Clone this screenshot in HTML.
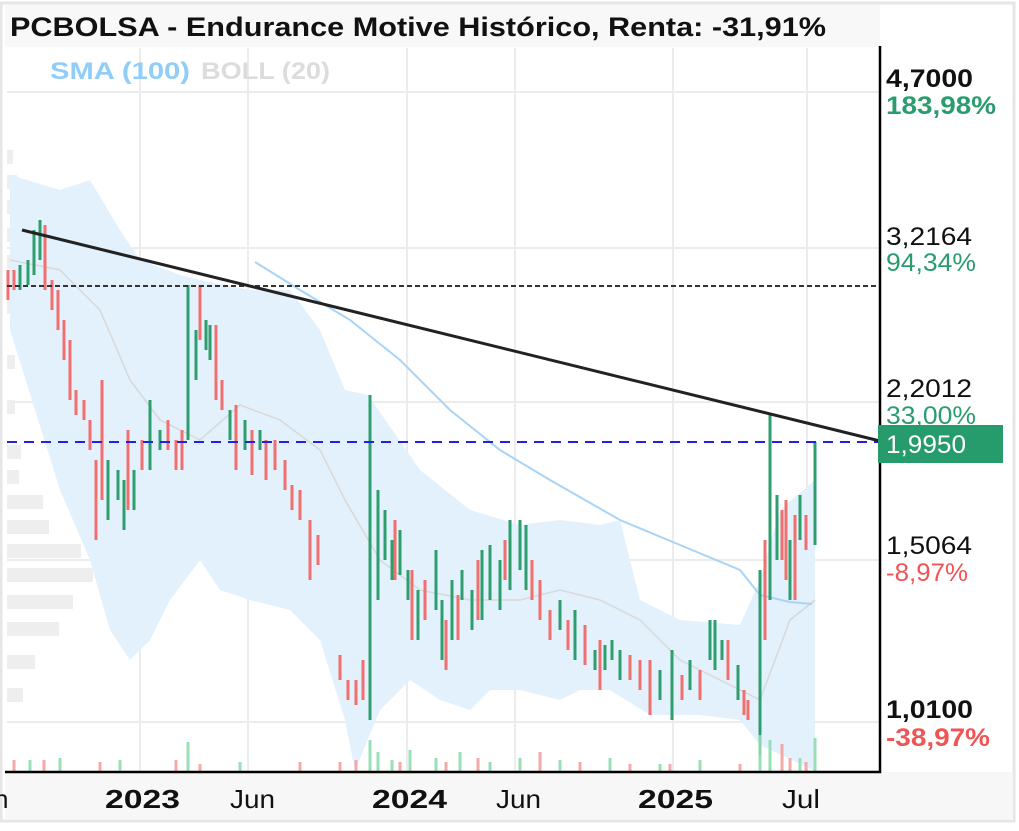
<!DOCTYPE html>
<html><head><meta charset="utf-8"><style>
body{margin:0;background:#fff;width:1019px;height:826px;overflow:hidden;font-family:"Liberation Sans",sans-serif}
</style></head><body>
<svg width="1019" height="826" viewBox="0 0 1019 826" xmlns="http://www.w3.org/2000/svg" font-family="Liberation Sans, sans-serif">
<rect x="0" y="0" width="1019" height="826" fill="#fff"/>
<rect x="1" y="3" width="1013" height="818" fill="none" stroke="#e6e6e6" stroke-width="3"/>
<rect x="5" y="5" width="875" height="42" fill="#f8f8f8"/>
<rect x="5" y="772" width="1008" height="48" fill="#f7f7f7"/>
<g stroke="#ececec" stroke-width="2">
<path d="M140 48V771M248 48V771M407 48V771M515 48V771M673 48V771M807 48V771M7 92H880M7 248H880M7 402H880M7 560H880M7 722H880"/>
</g>
<g fill="#eeeeee">
<rect x="7" y="150" width="6" height="14"/><rect x="7" y="175" width="10" height="14"/><rect x="7" y="200" width="12" height="14"/><rect x="7" y="228" width="8" height="14"/><rect x="7" y="255" width="16" height="14"/><rect x="7" y="300" width="8" height="14"/><rect x="7" y="355" width="8" height="14"/><rect x="7" y="400" width="8" height="14"/><rect x="7" y="445" width="14" height="14"/><rect x="7" y="470" width="12" height="14"/><rect x="7" y="495" width="36" height="14"/><rect x="7" y="520" width="42" height="14"/><rect x="7" y="544" width="74" height="14"/><rect x="7" y="568" width="86" height="14"/><rect x="7" y="595" width="66" height="14"/><rect x="7" y="622" width="52" height="14"/><rect x="7" y="655" width="28" height="14"/><rect x="7" y="688" width="16" height="14"/>
</g>
<path d="M10 175L60 190L90 180L120 230L140 260L180 275L200 280L250 290L290 290L320 330L345 390L368 395L420 470L470 510L520 525L560 520L600 525L620 520L640 600L680 620L740 625L760 580L780 510L815 480L815 771L760 745L740 720L700 715L650 715L610 690L580 690L560 700L520 690L490 690L470 710L440 700L410 680L380 710L355 771L345 720L320 640L290 610L250 600L220 590L200 560L170 600L150 640L130 660L110 630L90 560L60 490L10 330Z" fill="#e3f1fc"/>
<path d="M10 260L60 270L100 310L130 380L160 420L200 440L240 405L280 420L320 450L345 500L380 560L420 590L470 600L520 600L560 590L600 600L640 620L680 660L720 680L760 700L790 620L815 600" fill="none" stroke="#d8d8d8" stroke-width="1.5"/>
<path d="M255 262L300 290L350 320L400 360L450 410L500 450L550 480L620 520L680 545L740 570L760 595L790 602L812 604" fill="none" stroke="#a8d4f7" stroke-width="2"/>
<g stroke="#2e9e6e" stroke-width="3">
<path d="M20 290V265M28 285V260M34 275V230M40 260V220M108 520V460M118 500V470M124 530V480M134 510V470M150 470V400M160 450V430M188 440V285M196 380V330M206 350V320M210 360V325M230 440V410M245 450V420M260 450V430M370 720V395M378 600V490M385 560V510M392 580V540M400 575V530M408 600V570M418 640V590M436 610V550M442 660V600M452 640V580M462 600V570M472 630V590M482 620V550M490 600V545M500 610V560M510 590V520M520 570V520M526 590V525M560 630V600M575 660V610M595 670V650M605 670V645M612 660V640M620 680V650M660 700V670M672 720V650M690 690V660M710 660V620M715 670V620M722 660V640M738 700V665M760 755V570M770 600V415M777 560V495M790 600V540M800 540V495M815 545V442"/>
</g>
<g stroke="#f07070" stroke-width="3">
<path d="M8 300V270M14 290V270M45 290V225M52 310V280M58 330V290M64 360V320M70 400V340M76 415V390M84 420V400M90 450V420M96 540V460M102 500V380M128 510V430M142 470V440M168 450V420M176 470V440M182 470V430M200 340V285M216 400V325M222 410V380M236 470V405M252 475V430M266 480V440M275 470V440M285 490V460M292 510V485M300 520V490M310 580V520M318 565V535M340 680V655M348 700V680M356 705V680M363 700V660M395 580V520M412 640V570M425 620V580M446 670V620M458 640V595M478 620V560M505 580V540M532 600V560M540 620V580M550 640V610M568 650V620M585 665V625M600 690V640M630 680V655M640 690V660M650 715V660M682 700V675M700 700V670M728 680V640M744 715V690M748 720V700M765 640V540M782 560V510M786 580V500M795 600V515M806 550V515" />
</g>
<g stroke="#8fdcb0" stroke-width="3" opacity=".9">
<path d="M30 771V760M60 771V758M120 771V760M188 771V742M240 771V762M370 771V740M378 771V752M392 771V760M410 771V750M436 771V758M460 771V752M490 771V762M520 771V758M560 771V760M610 771V758M660 771V764M700 771V760M760 771V735M770 771V740M800 771V758M815 771V738"/>
</g>
<g stroke="#f5a0a0" stroke-width="3" opacity=".9">
<path d="M14 771V760M44 771V760M100 771V762M176 771V760M200 771V764M300 771V762M340 771V762M356 771V760M400 771V762M446 771V762M478 771V758M540 771V752M580 771V762M630 771V764M670 771V764M740 771V764M782 771V744M790 771V758M806 771V762"/>
</g>
<path d="M7 286H880" stroke="#333" stroke-width="2" stroke-dasharray="5,3"/>
<path d="M7 442H880" stroke="#2020e8" stroke-width="2" stroke-dasharray="10,7"/>
<path d="M22 230L880 441" stroke="#222" stroke-width="3"/>
<path d="M880 46V772H5" fill="none" stroke="#000" stroke-width="2.5"/>
<text x="10" y="36" font-size="27" font-weight="bold" fill="#111" textLength="816" lengthAdjust="spacingAndGlyphs">PCBOLSA - Endurance Motive Histórico, Renta: -31,91%</text>
<text x="50" y="79" font-size="24" font-weight="bold" fill="#90cdf8" textLength="140" lengthAdjust="spacingAndGlyphs">SMA (100)</text>
<text x="201" y="79" font-size="24" font-weight="bold" fill="#dcdcdc" textLength="129" lengthAdjust="spacingAndGlyphs">BOLL (20)</text>
<g font-size="25">
<text x="886" y="87" font-weight="bold" fill="#111" textLength="87" lengthAdjust="spacingAndGlyphs">4,7000</text>
<text x="886" y="114" font-weight="bold" fill="#2a9d6f" textLength="110" lengthAdjust="spacingAndGlyphs">183,98%</text>
<text x="886" y="245" fill="#111" textLength="86" lengthAdjust="spacingAndGlyphs">3,2164</text>
<text x="886" y="271" fill="#2a9d6f" textLength="90" lengthAdjust="spacingAndGlyphs">94,34%</text>
<text x="886" y="397" fill="#111" textLength="86" lengthAdjust="spacingAndGlyphs">2,2012</text>
<text x="886" y="424" fill="#2a9d6f" textLength="90" lengthAdjust="spacingAndGlyphs">33,00%</text>
<rect x="878" y="425" width="125" height="38" fill="#269c6d"/>
<text x="886" y="453" fill="#fff" textLength="80" lengthAdjust="spacingAndGlyphs">1,9950</text>
<text x="886" y="554" fill="#111" textLength="86" lengthAdjust="spacingAndGlyphs">1,5064</text>
<text x="886" y="581" fill="#f05454" textLength="82" lengthAdjust="spacingAndGlyphs">-8,97%</text>
<text x="886" y="718" font-weight="bold" fill="#111" textLength="87" lengthAdjust="spacingAndGlyphs">1,0100</text>
<text x="886" y="746" font-weight="bold" fill="#f05454" textLength="104" lengthAdjust="spacingAndGlyphs">-38,97%</text>
</g>
<g font-size="26">
<text x="-6" y="808" fill="#111">n</text>
<text x="105" y="808" font-weight="bold" fill="#111" textLength="75" lengthAdjust="spacingAndGlyphs">2023</text>
<text x="230" y="808" fill="#111" textLength="45" lengthAdjust="spacingAndGlyphs">Jun</text>
<text x="372" y="808" font-weight="bold" fill="#111" textLength="75" lengthAdjust="spacingAndGlyphs">2024</text>
<text x="496" y="808" fill="#111" textLength="45" lengthAdjust="spacingAndGlyphs">Jun</text>
<text x="638" y="808" font-weight="bold" fill="#111" textLength="75" lengthAdjust="spacingAndGlyphs">2025</text>
<text x="782" y="808" fill="#111" textLength="38" lengthAdjust="spacingAndGlyphs">Jul</text>
</g>
</svg>
</body></html>
